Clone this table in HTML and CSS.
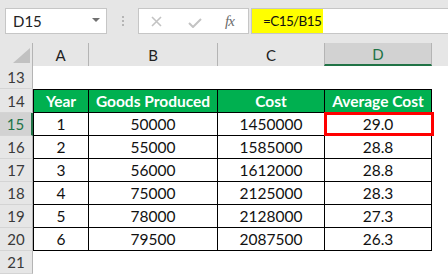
FILE: index.html
```html
<!DOCTYPE html>
<html lang="en">
<head>
    <meta charset="UTF-8">
    <title>Average Cost</title>
    <link rel="stylesheet" href="styles.css">
</head>
<body>
    <div class="formula-bar">
        <div class="name-box">
            <span>D15</span>
            <svg class="drop" width="8" height="4" viewBox="0 0 8 4"><polygon points="0,0 8,0 4,4" fill="#707070"/></svg>
        </div>
        <svg class="grip" width="3" height="12" viewBox="0 0 3 12">
            <rect x="0" y="0" width="2" height="2" fill="#b5b5b5"/>
            <rect x="0" y="4" width="2" height="2" fill="#b5b5b5"/>
            <rect x="0" y="8" width="2" height="2" fill="#b5b5b5"/>
        </svg>
        <div class="fx-buttons">
            <svg class="btn-x" width="11" height="11" viewBox="0 0 11 11"><path d="M1 1 L10 10 M10 1 L1 10" stroke="#c3c3c3" stroke-width="1.6" fill="none"/></svg>
            <svg class="btn-ok" width="14" height="10" viewBox="0 0 14 10"><path d="M1 5 L5 9 L13 1" stroke="#c3c3c3" stroke-width="2" fill="none"/></svg>
            <span class="fx">fx</span>
        </div>
        <div class="formula"><span class="hl">=C15/B15</span></div>
    </div>

    <div class="sheet">
        <!-- column headers -->
        <div class="corner"><svg width="17" height="15" viewBox="0 0 17 15"><polygon points="17,0 17,15 0,15" fill="#c1c1c1"/></svg></div>
        <div class="ch">A</div>
        <div class="ch">B</div>
        <div class="ch">C</div>
        <div class="ch active">D</div>
        <div class="ch end"></div>

        <!-- row 13 -->
        <div class="rh">13</div>
        <div class="c"></div><div class="c"></div><div class="c"></div><div class="c"></div><div class="c"></div>

        <!-- row 14 -->
        <div class="rh">14</div>
        <div class="t th l top">Year</div>
        <div class="t th top">Goods Produced</div>
        <div class="t th top">Cost</div>
        <div class="t th top">Average Cost</div>
        <div class="c"></div>

        <div class="rh active">15</div>
        <div class="t l">1</div><div class="t">50000</div><div class="t">1450000</div><div class="t sel">29.0</div><div class="c"></div>

        <div class="rh">16</div>
        <div class="t l">2</div><div class="t">55000</div><div class="t">1585000</div><div class="t">28.8</div><div class="c"></div>

        <div class="rh">17</div>
        <div class="t l">3</div><div class="t">56000</div><div class="t">1612000</div><div class="t">28.8</div><div class="c"></div>

        <div class="rh">18</div>
        <div class="t l">4</div><div class="t">75000</div><div class="t">2125000</div><div class="t">28.3</div><div class="c"></div>

        <div class="rh">19</div>
        <div class="t l">5</div><div class="t">78000</div><div class="t">2128000</div><div class="t">27.3</div><div class="c"></div>

        <div class="rh">20</div>
        <div class="t l">6</div><div class="t">79500</div><div class="t">2087500</div><div class="t">26.3</div><div class="c"></div>

        <!-- row 21 -->
        <div class="rh">21</div>
        <div class="c"></div><div class="c"></div><div class="c"></div><div class="c"></div><div class="c"></div>
    </div>
</body>
</html>
```

FILE: styles.css
```css
html, body {
    margin: 0;
    overflow: hidden;
}
body {
    width: 448px;
    height: 274px;
    background-color: #ffffff;
    font-family: 'Lato', 'Liberation Sans', sans-serif;
    color: #111111;
}
.formula-bar {
    height: 43px;
    box-sizing: border-box;
    padding-top: 8px;
    background-color: #e6e6e6;
    display: flex;
    align-items: flex-start;
}
.name-box {
    margin-left: 5px;
    width: 102px;
    height: 26px;
    box-sizing: border-box;
    background-color: #ffffff;
    border: 1px solid #c6c6c6;
    display: flex;
    align-items: center;
    justify-content: space-between;
    padding: 0 6px 0 7px;
    font-size: 15px;
    color: #222222;
}
.name-box .drop {
    margin-top: -3px;
}
.grip {
    margin: 8px 0 0 15px;
}
.fx-buttons {
    margin-left: 13px;
    width: 111px;
    height: 26px;
    box-sizing: border-box;
    background-color: #ffffff;
    border: 1px solid #c6c6c6;
    display: flex;
    align-items: center;
    padding-left: 12px;
}
.btn-x {
    margin-top: 1px;
}
.btn-ok {
    margin: 3px 0 0 26px;
}
.fx {
    margin-left: 23px;
    font-family: 'Liberation Serif', serif;
    font-style: italic;
    font-size: 15px;
    color: #6c6c6c;
    letter-spacing: -1px;
}
.formula {
    margin-left: 2px;
    flex: 1;
    height: 26px;
    box-sizing: border-box;
    background-color: #ffffff;
    border: 1px solid #c6c6c6;
    border-right: none;
    display: flex;
}
.formula .hl {
    padding: 0 2px 0 11px;
    background-color: #ffff00;
    font-size: 13.5px;
    letter-spacing: -0.6px;
    line-height: 24px;
    white-space: nowrap;
    color: #111111;
}
.sheet {
    display: grid;
    grid-template-columns: 33px 56px 129px 107px 107px 16px;
    grid-template-rows: 23px 23px 24px repeat(6, 23px) 23px;
}
.corner {
    background-color: #e6e6e6;
    border-right: 1px solid #b4b4b4;
    display: flex;
    align-items: flex-end;
    justify-content: flex-end;
    padding: 0 2px 3px 0;
}
.ch {
    background-color: #e6e6e6;
    border-right: 1px solid #b4b4b4;
    display: flex;
    align-items: center;
    justify-content: center;
    font-size: 15px;
    color: #222222;
}
.ch.active {
    background-color: #d2d2d2;
    border-left: 1px solid #b4b4b4;
    border-bottom: 2px solid #217346;
    margin-left: -1px;
    color: #217346;
}
.ch.end {
    border-right: none;
}
.rh {
    background-color: #e6e6e6;
    border-right: 1px solid #b4b4b4;
    border-bottom: 1px solid #d4d4d4;
    display: flex;
    align-items: center;
    justify-content: center;
    font-size: 15px;
    color: #3a3a3a;
}
.rh.active {
    background-color: #d2d2d2;
    border-right: 2px solid #217346;
    color: #217346;
}
.c {
    background-color: #ffffff;
}
.t {
    border-right: 1px solid #000000;
    border-bottom: 1px solid #000000;
    display: flex;
    align-items: center;
    justify-content: center;
    font-size: 15.5px;
    color: #111111;
}
.t.l {
    border-left: 1px solid #000000;
}
.t.top {
    border-top: 1px solid #000000;
}
.t.th {
    background-color: #00b050;
    color: #ffffff;
    font-weight: bold;
}
.t.sel {
    position: relative;
}
.t.sel::after {
    content: '';
    position: absolute;
    left: -1px;
    top: -1px;
    width: 110px;
    height: 24px;
    box-sizing: border-box;
    border: 3px solid #ff0000;
}
```
